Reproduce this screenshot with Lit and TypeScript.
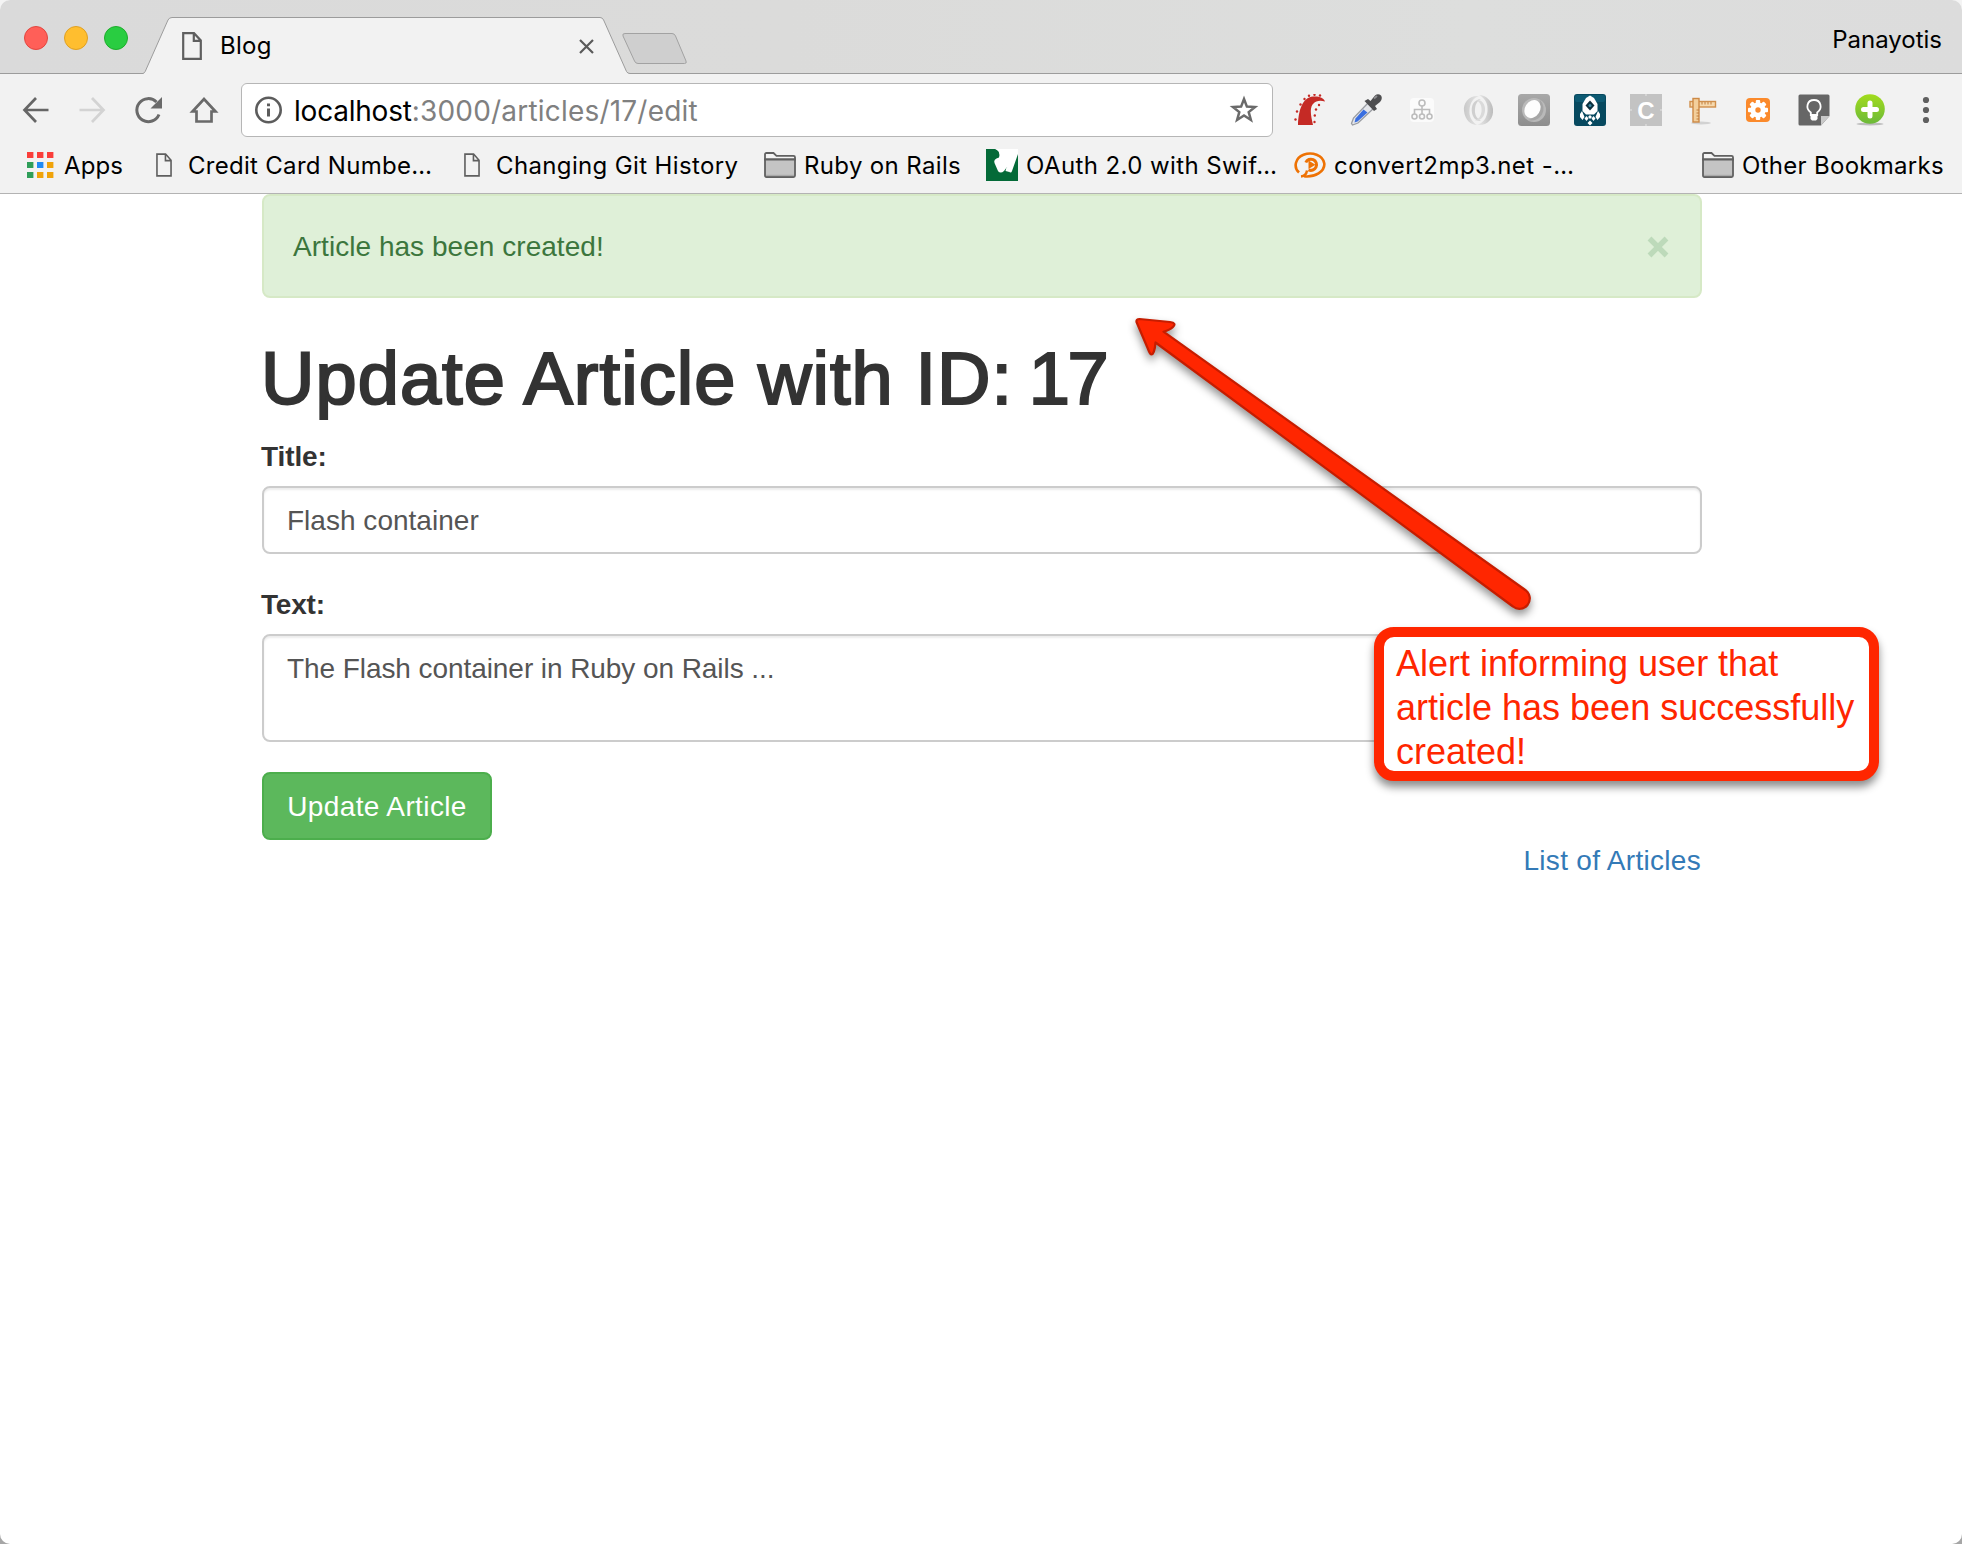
import { LitElement, html, svg, css } from 'lit';
import { customElement } from 'lit/decorators.js';
import { styleMap } from 'lit/directives/style-map.js';

const pageIcon = (w: number, h: number, sw: number) => svg`
  <svg width=${w} height=${h} viewBox="0 0 20 28" preserveAspectRatio="none" fill="none" stroke="#5f5f5f" stroke-width=${sw}>
    <path d="M1.2 1.2H12L18.8 8.5V26.8H1.2Z M11.8 1.2V8.8H18.8" />
  </svg>`;

const folderIcon = svg`
  <svg width="32" height="26" viewBox="0 0 32 26">
    <path d="M1 2.5Q1 1 2.5 1H9.5L12.5 3.8H29.5Q31 3.8 31 5.3V7.5H1Z" fill="#f4f4f4" stroke="#606060" stroke-width="1.8" />
    <path d="M1 7.5H31V23.5Q31 25 29.5 25H2.5Q1 25 1 23.5Z" fill="#c4c4c4" stroke="#606060" stroke-width="1.8" />
    <path d="M2 22.8H30V24.2H2Z" fill="#a9a9a9" />
  </svg>`;

const appsIcon = svg`
  <svg width="27" height="26" viewBox="0 0 27 26">
    ${[['#fa3e3a', '#fa3e3a', '#fa3e3a'], ['#2f9e59', '#1f8af5', '#f0a30a'], ['#2f9e59', '#f0a30a', '#f0a30a']].map((row, y) =>
      row.map((c, x) => svg`<rect x=${x * 10} y=${y * 10} width="6.4" height="6" fill=${c} />`))}
  </svg>`;

const wIcon = svg`
  <svg width="32" height="32" viewBox="0 0 32 32">
    <rect width="32" height="32" fill="#046a38" />
    <path d="M8 0H32V5L26 22Q25 25 22.500 22L21 18L18 22Q14.500 25 12 22L8.500 14Q7 10 13 8.500Q15 3 8 0Z" fill="#fff" />
    <path d="M12 22L13 14L15 23Z M19.500 22L21 16L23.500 23Z" fill="#fff" />
    <path d="M0 0H9Q14 2 13 6Q11 8 7 8L0 12Z" fill="#046a38" />
  </svg>`;

const convertIcon = svg`
  <svg width="32" height="26" viewBox="0 0 32 26" fill="none" stroke="#ee7204">
    <path d="M5 20.500C-1 15 1.500 6 9.500 2.800C18-.5 29 3 30.300 11.500C31 19.500 21 25.500 10 24.300" stroke-width="2.600" />
    <path d="M7 24.500C11 24 12.500 22 13 18.500" stroke-width="2.400" />
    <path d="M11.800 10.500A5.600 5.600 0 1 1 14.500 17.800" stroke-width="3" />
    <path d="M14.500 8.500L21.500 12.800L14.500 17Z" fill="#ee7204" stroke="none" />
  </svg>`;

interface Bookmark { label: string; icon: unknown; kind: string; track: number; }

const bookmarks: Bookmark[] = [
  { label: 'Apps', icon: appsIcon, kind: 'apps', track: 0.1 },
  { label: 'Credit Card Numbe…', icon: pageIcon(16, 24, 2), kind: 'page', track: 0.29 },
  { label: 'Changing Git History', icon: pageIcon(16, 24, 2), kind: 'page', track: 0.36 },
  { label: 'Ruby on Rails', icon: folderIcon, kind: '', track: 0.35 },
  { label: 'OAuth 2.0 with Swif…', icon: wIcon, kind: '', track: 0.4 },
  { label: 'convert2mp3.net -…', icon: convertIcon, kind: '', track: 0.45 },
];

const navIcons = [
  svg`<path d="M28.500 16H4.500M16 4L4.500 16L16 28" fill="none" stroke="#666" stroke-width="2.700" />`,
  svg`<path d="M3.500 16H27.500M16 4L27.500 16L16 28" fill="none" stroke="#d3d3d3" stroke-width="2.700" />`,
  svg`<path d="M27 20.500A11.500 11.500 0 1 1 24.500 8" fill="none" stroke="#6a6a6a" stroke-width="3" /><path d="M30 3V14.500H18.500Z" fill="#6a6a6a" />`,
  svg`<path d="M4.500 17.500L16 5L27.500 17.500H23.500V27.500H8.500V17.500Z" fill="none" stroke="#6a6a6a" stroke-width="2.700" />`,
];

const suckers = [[1.5, 25.5], [3, 17.5], [6.5, 10.5], [10.5, 5], [15, 1.8], [20.5, .8], [26, 1.5], [20.500, 28], [20.800, 21.500], [22, 15.500], [25, 11]];

const extensionIcons = [
  svg`<path d="M4 31C4.500 17 8 3.500 19 2.500C25 2 29.500 3.500 31 7.500C23 5 17 8.500 16.800 17C16.800 22 18 26 19 31Z" fill="#c52a25" />
    ${suckers.map(([x, y]) => svg`<circle cx=${x} cy=${y} r="1.200" fill="#c52a25" />`)}`,
  svg`<path d="M18 9L23.500 14.500L8 29L2.500 31L1.500 29.500L3.500 24Z" fill="#e3e5ea" stroke="#999ca2" stroke-width="1.300" />
    <path d="M13.500 15.500L17.500 18.500L7.500 27.500L4.500 28.500L5.500 24.500Z" fill="#3a6fe0" />
    <path d="M14.500 7L18 5L20.500 7L25 1.500Q28-1 31 1.500Q33 4.500 30 8L25 12L27 15L24 17Z" fill="#4e4e50" />
    <path d="M24 4.500L27 2" stroke="#8d8d90" stroke-width="1.800" />`,
  svg`<rect x="4" y="4" width="24" height="24" rx="4" fill="#fbfbfb" />
    <g fill="none" stroke="#bdbdbd" stroke-width="1.600"><circle cx="16" cy="9" r="3" /><path d="M16 12V20M8.500 20V15.500H23.500V20" />
    <circle cx="8.500" cy="22.500" r="2.500" /><circle cx="16" cy="22.500" r="2.500" /><circle cx="23.500" cy="22.500" r="2.500" /></g>`,
  svg`<defs><linearGradient id="ringA" x1="0" x2="1"><stop stop-color="#c9c9c9" /><stop offset="1" stop-color="#e6e6e6" /></linearGradient>
      <linearGradient id="ringB" x1="0" x2="1"><stop stop-color="#ececec" /><stop offset="1" stop-color="#bcbcbc" /></linearGradient></defs>
    <path d="M17 2C7 1 1 9 2 17C3 26 9 31 15 31C9 27 7 22 7.500 16C8 9 11 4 17 2Z" fill="url(#ringA)" />
    <path d="M15 31C25 32 32 25 31 15C30 7 24 1 17 1C24 5 26 10 25.500 17C25 24 21 29 15 31Z" fill="url(#ringB)" />
    <path d="M19 5C11 6 9 12 10 19C11 24 14 27 19 27C14 24 12.500 20 13 15C13.500 10 15 7 19 5Z" fill="#cfcfcf" />
    <path d="M13 26.500C20 27 23.500 21 23 14C22.500 9 19 5.500 14.500 6C19 9 20 13 19.500 17.500C19 22 17 25 13 26.500Z" fill="#dadada" />`,
  svg`<defs><linearGradient id="tileA" y1="0" y2="1" x2="0"><stop stop-color="#a8a8a8" /><stop offset="1" stop-color="#8e8e8e" /></linearGradient></defs>
    <rect width="32" height="32" rx="3.500" fill="url(#tileA)" /><circle cx="16" cy="16" r="12" fill="#b9b9b9" />
    <path d="M22 6A12 12 0 0 1 10 26Q20 24 22 6Z" fill="#a5a5a5" />
    <ellipse cx="14.500" cy="15" rx="7.500" ry="9.500" transform="rotate(32 14.500 15)" fill="#fdfdfd" />`,
  svg`<rect width="32" height="32" rx="3" fill="#07495f" /><rect x="1" y="1" width="30" height="7" rx="2" fill="#0d5a73" />
    <path d="M16 1.500L20 4L23.500 10V17L20 20.500H12L8.500 17V10L12 4Z" fill="#fff" />
    <path d="M16 6.500L20.500 11.500L16 16.500L11.500 11.500Z" fill="#0b2f3d" /><circle cx="16" cy="11.500" r="1.500" fill="#3b8aa5" />
    <path d="M8 17L6 20V23L8.500 26L10.500 23ZM24 17L26 20V23L23.500 26L21.500 23Z" fill="#fff" />
    <path d="M16 21L18 23L16 25L14 23ZM12.500 22L14.500 24.500L12.500 27L10.500 24.500ZM19.500 22L21.500 24.500L19.500 27L17.500 24.500ZM16 26.500L18.500 29L16 31.500L13.500 29Z" fill="#fff" />`,
  svg`<rect width="32" height="32" fill="#c3c3c3" />
    <text x="16" y="24.500" text-anchor="middle" font-family="Liberation Sans, sans-serif" font-weight="700" font-size="24" fill="#fff">C</text>
    <path d="M16 0V2M16 30V32M0 16H2M30 16H32" stroke="#e6e6e6" />`,
  svg`<ellipse cx="15" cy="29" rx="10" ry="1.500" fill="#d2d2d2" />
    <rect x="4" y="7.500" width="25.500" height="5.500" fill="#f6d9ae" stroke="#d08f4c" stroke-width="1.400" />
    <rect x="7" y="4.500" width="6" height="23.500" fill="#f3cf9c" stroke="#cd8945" stroke-width="1.400" />
    <path d="M16 8V10.500M19 8V10.500M22 8V10.500M25 8V10.500M10.500 16H13M10.500 19H13M10.500 22H13M10.500 25H13" stroke="#c07c3b" />`,
  svg`<rect x="4" y="4" width="24" height="24" rx="4" fill="#fb8a2c" />
    <g fill="#fff"><circle cx="16" cy="16" r="7.600" />
    ${[0, 45, 90, 135].map((a) => svg`<rect x="13.800" y="6" width="4.400" height="20" rx="1" transform="rotate(${a} 16 16)" />`)}</g>
    <circle cx="16" cy="16" r="2.700" fill="#fb8a2c" />`,
  svg`<path d="M2 .5H30Q31.500 .5 31.500 2V22L23 31.500H2Q.5 31.500 .5 30V2Q.5 .5 2 .5Z" fill="#666" /><path d="M31.500 22L23 31.500V22Z" fill="#c9c9c9" />
    <path d="M12.800 21V18.500C7 14.500 9 6 16 6S25 14.500 19.200 18.500V21Z" fill="none" stroke="#fff" stroke-width="1.800" />
    <path d="M12.500 22H19.500V25L18 26.500H14L12.500 25Z" fill="#fff" />`,
  svg`<defs><linearGradient id="addA" y1="0" y2="1" x2="0"><stop stop-color="#a2dc1c" /><stop offset="1" stop-color="#6cb93a" /></linearGradient></defs>
    <ellipse cx="16" cy="30" rx="13.500" ry="1.500" fill="#bdbdbd" /><circle cx="16" cy="15" r="14.800" fill="url(#addA)" />
    <path d="M16 9V22M9.500 15.500H22.500" stroke="#fff" stroke-width="5" stroke-linecap="round" />`,
  svg`<g fill="#606060"><circle cx="16" cy="6" r="3.100" /><circle cx="16" cy="16" r="3.100" /><circle cx="16" cy="26" r="3.100" /></g>`,
];

@customElement('browser-chrome')
export class BrowserChrome extends LitElement {
  static styles = css`
    :host { display: block; font-family: Inter, "Open Sans", sans-serif; font-size: 24px; color: #000; }
    svg { display: block; flex: none; }
    .strip { box-sizing: border-box; height: 74px; display: flex; align-items: flex-start; padding-left: 24px;
      background: linear-gradient(90deg, #dadada, #dbdbda 40%, #dddedd 75%, #dcdcdc); border-bottom: 1px solid #9c9c9c; }
    .lights { display: flex; gap: 16px; padding-top: 26px; }
    .light { box-sizing: border-box; width: 24px; height: 24px; border-radius: 50%; }
    .close { background: #ff5f58; border: 1px solid #e2463f; }
    .minimise { background: #ffbe2f; border: 1px solid #dfa023; }
    .zoom { background: #29cd41; border: 1px solid #1dad2b; }
    .tab { position: relative; box-sizing: border-box; width: 487px; height: 57px; margin: 17px 0 0 15px;
      display: flex; align-items: center; padding-left: 39px; }
    .tab-shape { position: absolute; left: 0; top: 0; }
    .tab-icon { position: relative; padding-top: 1px; width: 38px; }
    .tab-title { position: relative; flex: 1; letter-spacing: .3px; line-height: 30px; }
    .tab-close { position: relative; margin: 1px 36px 0 0; }
    .new-tab { margin: 32px 0 0 -8px; }
    .profile { margin: 25px 20px 0 auto; line-height: 30px; letter-spacing: 0; }
    .toolbar { box-sizing: border-box; height: 63px; display: flex; align-items: center; gap: 21px; padding: 9px 20px 0; background: #f2f2f2; }
    .group { display: flex; gap: 24px; align-items: center; }
    .address { box-sizing: border-box; flex: 1; height: 54px; border: 1px solid #b6b6b6; border-radius: 6px; background: #fff;
      display: flex; align-items: center; padding: 0 13px 0 12px; font-size: 28px; }
    .url { flex: 1; padding: 2px 0 0 10px; color: #808080; letter-spacing: .2px; }
    .host { color: #000; letter-spacing: -.22px; }
    .bookmarks { box-sizing: border-box; height: 57px; display: grid; grid-template-columns: 129px 308px 300px 222px 308px auto 1fr;
      align-items: center; padding: 0 18px 0 27px; background: #f2f2f2; border-bottom: 1px solid #b3b3b3; }
    .bookmark { display: flex; align-items: center; white-space: nowrap; }
    .caption { line-height: 30px; padding-top: 2px; }
    .slot { width: 40px; flex: none; display: flex; align-items: center; }
    .slot.apps { width: 37px; }
    .slot.page { width: 32px; }
    .other { justify-self: end; }
  `;

  private bookmark(b: Bookmark, extra = '') {
    return html`<div class="bookmark ${extra}">
      <span class="slot ${b.kind}">${b.icon}</span>
      <span class="caption" style=${styleMap({ letterSpacing: `${b.track}px` })}>${b.label}</span>
    </div>`;
  }

  render() {
    return html`
      <div class="strip">
        <div class="lights">
          <span class="light close"></span><span class="light minimise"></span><span class="light zoom"></span>
        </div>
        <div class="tab">
          <svg class="tab-shape" width="487" height="57" viewBox="0 0 487 57">
            <path d="M0 56.500Q1.500 56 2.200 54.500L25 3Q26.200 .5 29 .5H457Q459.500 .5 460.600 3L483.500 54.500Q484.500 56.500 487 56.500V57H0Z" fill="#f2f2f2" />
            <path d="M0 56.500Q1.500 56 2.200 54.500L25 3Q26.200 .5 29 .5H457Q459.500 .5 460.600 3L483.500 54.500Q484.500 56.500 487 56.500" fill="none" stroke="#9c9c9c" />
          </svg>
          <span class="tab-icon">${pageIcon(20, 28, 2.2)}</span>
          <span class="tab-title">Blog</span>
          <svg class="tab-close" width="15" height="15" viewBox="0 0 15 15"><path d="M1 1L14 14M14 1L1 14" stroke="#5a5a5a" stroke-width="2.200" /></svg>
        </div>
        <svg class="new-tab" width="68" height="34" viewBox="0 0 68 34">
          <path d="M3 1.500H50Q52.500 1.500 53.500 4L64 29Q65 31.500 62.500 31.500H16Q13.500 31.500 12.500 29L1 4Q0 1.500 3 1.500Z" fill="#cfcfcf" stroke="#a2a2a2" />
        </svg>
        <span class="profile">Panayotis</span>
      </div>
      <div class="toolbar">
        <div class="group">${navIcons.map((i) => html`<svg width="32" height="32" viewBox="0 0 32 32">${i}</svg>`)}</div>
        <div class="address">
          <svg width="30" height="30" viewBox="0 0 30 30">
            <circle cx="14.500" cy="15" r="12.200" fill="none" stroke="#5c5c5c" stroke-width="2.600" />
            <path d="M13 13.500H16V21.500H13Z M13 8.500H16V11.300H13Z" fill="#5c5c5c" />
          </svg>
          <span class="url"><span class="host">localhost</span>:3000/articles/17/edit</span>
          <svg width="30" height="30" viewBox="0 0 30 30">
            <path d="M15 4L17.900 11.600L26 12L19.700 17.100L21.900 25L15 20.500L8.100 25L10.300 17.100L4 12L12.100 11.600Z" fill="none" stroke="#6a6a6a" stroke-width="2.500" />
          </svg>
        </div>
        <div class="group">${extensionIcons.map((i) => html`<svg width="32" height="32" viewBox="0 0 32 32">${i}</svg>`)}</div>
      </div>
      <div class="bookmarks">
        ${bookmarks.map((b) => this.bookmark(b))}
        ${this.bookmark({ label: 'Other Bookmarks', icon: folderIcon, kind: '', track: 0.29 }, 'other')}
      </div>`;
  }
}

@customElement('article-form')
export class ArticleForm extends LitElement {
  static styles = css`
    :host { display: block; width: 1440px; margin-left: 262px; font: 28px/40px "Liberation Sans", Arial, sans-serif; color: #333; }
    .alert { box-sizing: border-box; height: 104px; border: 2px solid #d6e9c6; border-radius: 8px; background: #dff0d8; color: #3c763d;
      display: flex; align-items: center; justify-content: space-between; padding: 2px 31px 0 29px; letter-spacing: .04px; }
    .heading { margin: 41px 0 17px -1px; font-size: 74px; line-height: 80px; font-weight: 400; letter-spacing: 1.05px;
      -webkit-text-stroke: 2.200px #333; white-space: nowrap; }
    .number { margin-left: -6px; letter-spacing: -2.500px; }
    .label { display: block; box-sizing: border-box; height: 40px; padding-top: 1px; margin: 0 0 10px -1px; font-weight: 700; }
    .title-label { letter-spacing: -.1px; }
    .text-label { letter-spacing: -.2px; }
    .control { box-sizing: border-box; margin-bottom: 30px; border: 2px solid #ccc; border-radius: 8px; padding: 13px 23px 11px; height: 68px;
      background: #fff; color: #555; box-shadow: inset 0 2px 2px rgba(0, 0, 0, .075); letter-spacing: .02px; }
    .area { height: 108px; letter-spacing: -.07px; }
    .submit { box-sizing: border-box; display: block; width: 230px; height: 68px; border: 2px solid #4cae4c; border-radius: 8px; padding: 2px 0 0;
      background: #5cb85c; color: #fff; font: inherit; letter-spacing: .38px; }
    .links { padding: 1px 1px 0 0; text-align: right; color: #337ab7; letter-spacing: .3px; }
  `;

  render() {
    return html`
      <div class="alert">
        <span>Article has been created!</span>
        <svg width="22" height="22" viewBox="0 0 22 22"><path d="M2.500 2.500L19.500 19.500M19.500 2.500L2.500 19.500" stroke="#bddaba" stroke-width="5.400" /></svg>
      </div>
      <h1 class="heading">Update Article with ID: <span class="number">17</span></h1>
      <label class="label title-label">Title:</label>
      <div class="control">Flash container</div>
      <label class="label text-label">Text:</label>
      <div class="control area">The Flash container in Ruby on Rails ...</div>
      <button class="submit">Update Article</button>
      <div class="links">List of Articles</div>`;
  }
}

@customElement('app-root')
export class AppRoot extends LitElement {
  static styles = css`
    :host { display: block; height: 1544px; background: linear-gradient(#f4f4f4 50%, #a6a6a6 50%); }
    .window { position: relative; height: 1544px; border-radius: 10px; overflow: hidden; background: #fff; }
    .arrow { position: absolute; left: 1110px; top: 300px; filter: drop-shadow(0 5px 4px rgba(0, 0, 0, .42)); }
    .callout { position: absolute; box-sizing: border-box; left: 1374px; top: 627px; width: 505px; height: 154px; border: 10px solid #ff2600;
      border-radius: 20px; background: #fff; padding: 5px 12px 0; color: #ff2600; font: 36px/44px "Liberation Sans", Arial, sans-serif;
      box-shadow: 0 6px 9px rgba(0, 0, 0, .45); white-space: nowrap; }
  `;

  render() {
    return html`
      <div class="window">
        <browser-chrome></browser-chrome>
        <article-form></article-form>
        <svg class="arrow" width="440" height="330" viewBox="1110 300 440 330">
          <path d="M1136.500 322Q1136 319 1139.500 319L1170 322Q1177 323 1173 327Q1170 330 1163.500 331.700L1526 590.500A10 10 0 0 1 1513 606.500L1155.500 342.500C1155 350 1153 354.500 1151.500 354.500Q1150 354.500 1148 349Z"
            fill="#ff2600" stroke="#c61d00" stroke-width="2.200" stroke-linejoin="round" />
        </svg>
        <div class="callout">Alert informing user that<br />article has been successfully<br />created!</div>
      </div>`;
  }
}
